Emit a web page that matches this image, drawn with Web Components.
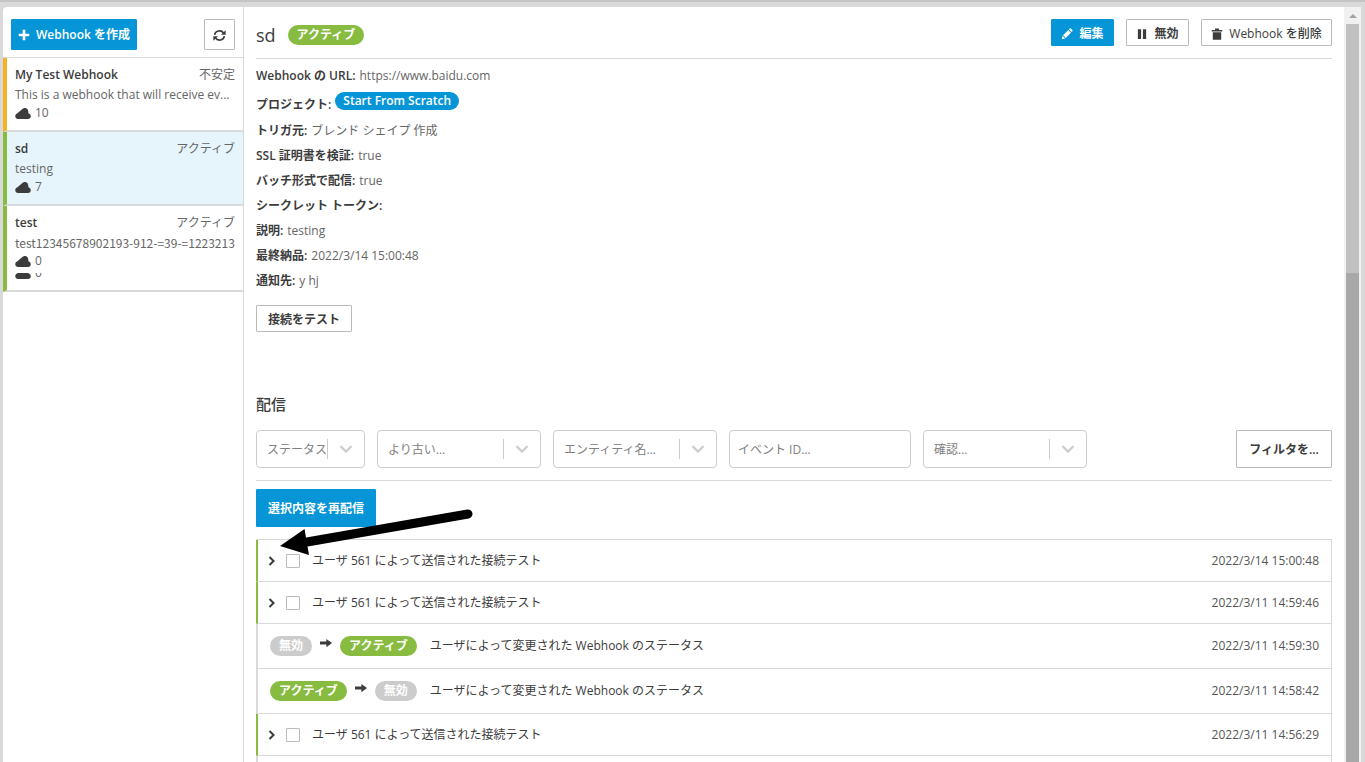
<!DOCTYPE html>
<html lang="ja">
<head>
<meta charset="utf-8">
<meta name="viewport" content="width=device-width, initial-scale=1">
<title>Webhook</title>
<style>
  html, body { margin: 0; height: 100%; }
  body {
    font: 400 12px/18px "Open Sans", "Noto Sans CJK JP", sans-serif;
    color: #3c3c3c;
    background: #d9d9d9;
    overflow: hidden;
    --line: #d9d9d9;
    --blue: #0696d7;
    --green: #87bc40;
    --muted: #666;
    --strong: 600;
  }
</style>
</head>
<body>
<webhook-app></webhook-app>
<script>
const ICONS = {
  plus: '<path d="M6.2 1h3.6v5.2H15v3.6H9.8V15H6.2V9.8H1V6.2h5.2z"/>',
  refresh: '<g fill="none" stroke="currentColor" stroke-width="2"><path d="M2 7.2A6 5.6 0 0 1 13 5M14 8.8A6 5.6 0 0 1 3 11"/></g><path d="M15.6 1.6v5.6H9.8zM.4 14.4V8.8h5.8z"/>',
  pencil: '<path d="M1 15l1-4.6 3.6 3.6zM2.8 9.6l6.9-6.9 3.6 3.6-6.9 6.9zM10.6 1.8l1-1q.9-.7 1.8.1l1.7 1.7q.8.9.1 1.8l-1 1z"/>',
  pause: '<path d="M2.5 1.5h4.3v13H2.5zM9.2 1.5h4.3v13H9.2z"/>',
  trash: '<path d="M1 2.500h4.400V.5h5.200v2H15v2H1zM2.400 5.700h11.200V15.500H2.400z"/>',
  cloud: '<path d="M3.600 14A3.200 3.200 0 0 1 .2 11A3.200 3.200 0 0 1 2.400 8.200L6.800 4.400A3.600 3.600 0 0 1 13.300 6.400L13.400 8.200A3 3 0 0 1 15.800 11A3 3 0 0 1 12.700 14z"/>',
  down: '<path fill="none" stroke="currentColor" stroke-width="2.600" stroke-linecap="round" stroke-linejoin="round" d="M2.500 5.500L8 11l5.500-5.500"/>',
  right: '<path fill="none" stroke="currentColor" stroke-width="3.200" d="M4 1.500L10.500 8L4 14.500"/>',
  arrow: '<path d="M0 6h8.500V2.500L16 8l-7.500 5.500V10H0z"/>'
};

const define = (name, html, setup) => {
  const template = document.createElement('template');
  template.innerHTML = html;
  customElements.define(name, class extends HTMLElement {
    constructor() {
      super();
      this.attachShadow({ mode: 'open' }).append(template.content.cloneNode(true));
    }
    connectedCallback() { if (setup) setup(this, this.shadowRoot); }
  });
};

define('ui-icon', `
  <style>
    :host { display: inline-block; flex: none; width: var(--icon, 12px); height: var(--icon, 12px); }
    svg { display: block; width: 100%; height: 100%; fill: currentColor; }
  </style>
  <svg viewBox="0 0 16 16" aria-hidden="true"></svg>`,
  (el, root) => { root.querySelector('svg').innerHTML = ICONS[el.getAttribute('name')]; });

define('ui-button', `
  <style>
    :host { display: inline-flex; flex: none; height: 27px; }
    button {
      display: flex; align-items: center; justify-content: center; gap: 6px;
      box-sizing: border-box; width: 100%; height: 100%; padding: 2px 0 0; margin: 0;
      font: inherit; font-weight: var(--weight, var(--strong)); white-space: nowrap;
      color: inherit; background: #fff; border: 1px solid #bbb; border-radius: 1px;
    }
    :host([primary]) button { color: #fff; background: var(--blue); border-color: var(--blue); }
  </style>
  <button type="button"><slot></slot></button>`,
  (el, root) => {
    if (el.hasAttribute('label')) root.querySelector('button').setAttribute('aria-label', el.getAttribute('label'));
  });

define('status-pill', `
  <style>
    :host {
      display: inline-flex; align-items: center; flex: none; box-sizing: border-box;
      height: 20px; padding: 0 9px; border-radius: 10px;
      color: #fff; background: var(--green); font-weight: 700;
    }
    :host([tone="off"]) { background: #ccc; }
    :host([tone="project"]) { height: 18px; padding: 0 8px; background: var(--blue); font-weight: var(--strong); }
  </style>
  <slot></slot>`);

define('webhook-item', `
  <style>
    :host {
      display: block; padding: 6px 8px 9px; border-left: 4px solid var(--green);
      border-bottom: 2px solid var(--line); background: #fff;
    }
    :host([tone="warn"]) { border-left-color: #f5b324; }
    :host([selected]) { background: #e6f4fb; }
    .head { display: flex; justify-content: space-between; line-height: 21px; }
    .name { font-weight: var(--strong); }
    .state, .text, .count { color: var(--muted); }
    .text { line-height: 20px; white-space: nowrap; }
    :host([compact]) .text { font-family: "Noto Sans CJK JP", sans-serif; }
    .count { display: flex; align-items: center; gap: 4px; line-height: 16px; --icon: 16px; }
    .count ui-icon { color: #3c3c3c; }
    .tail { display: flex; align-items: flex-end; height: 8px; overflow: hidden; margin-top: 4px; }
  </style>
  <div class="head"><span class="name"></span><span class="state"></span></div>
  <div class="text"></div>
  <div class="count"><ui-icon name="cloud"></ui-icon><span></span></div>`,
  (el, root) => {
    root.querySelector('.name').textContent = el.getAttribute('name');
    root.querySelector('.state').textContent = el.getAttribute('state');
    root.querySelector('.text').textContent = el.getAttribute('text');
    const count = root.querySelector('.count');
    count.querySelector('span').textContent = el.getAttribute('count');
    if (el.hasAttribute('tail')) {
      const tail = document.createElement('div');
      tail.className = 'tail';
      tail.append(count.cloneNode(true));
      count.after(tail);
    }
  });

define('webhook-sidebar', `
  <style>
    :host { display: block; box-sizing: border-box; background: #fff; border-right: 1px solid var(--line); border-top-left-radius: 4px; }
    header {
      display: flex; align-items: center; justify-content: space-between; box-sizing: border-box;
      height: 51px; padding: 4px 8px 0; border-bottom: 1px solid var(--line);
    }
    ui-button { height: 31px; --icon: 12px; }
    .create { width: 126px; }
    .reload { width: 31px; --icon: 13px; }
  </style>
  <header>
    <ui-button primary class="create"><ui-icon name="plus"></ui-icon><span>Webhook を作成</span></ui-button>
    <ui-button class="reload" label="更新"><ui-icon name="refresh"></ui-icon></ui-button>
  </header>
  <webhook-item tone="warn" name="My Test Webhook" state="不安定" text="This is a webhook that will receive ev..." count="10"></webhook-item>
  <webhook-item selected name="sd" state="アクティブ" text="testing" count="7"></webhook-item>
  <webhook-item compact name="test" state="アクティブ" text="test12345678902193-912-=39-=1223213" count="0" tail></webhook-item>`);

define('detail-field', `
  <style>
    :host { display: flex; align-items: baseline; gap: 4px; height: 25px; line-height: 25px; }
    :host([tall]) { height: 30px; line-height: 34px; align-items: flex-start; }
    :host([tall]) .value { display: flex; padding-top: 4px; line-height: 18px; }
    .label { font-weight: var(--strong); }
    .value { color: var(--muted); }
  </style>
  <span class="label"></span><span class="value"><slot></slot></span>`,
  (el, root) => { root.querySelector('.label').textContent = el.getAttribute('label') + ':'; });

define('filter-select', `
  <style>
    :host {
      display: flex; align-items: center; box-sizing: border-box; width: 164px; height: 38px;
      border: 1px solid #ccc; border-radius: 4px; color: #808080; background: #fff;
    }
    select {
      appearance: none; flex: 1; min-width: 0; height: 36px; margin: 0; padding: 2px 0 0 10px;
      font: inherit; color: inherit; background: none; border: 0; text-overflow: clip;
    }
    .mark {
      display: flex; align-items: center; justify-content: center; box-sizing: border-box;
      width: 37px; height: 20px; border-left: 1px solid #ccc; color: #ccc; --icon: 14px;
    }
  </style>
  <select><option></option></select>
  <span class="mark"><ui-icon name="down"></ui-icon></span>`,
  (el, root) => {
    root.querySelector('option').textContent = el.getAttribute('text');
    root.querySelector('select').setAttribute('aria-label', el.getAttribute('text'));
  });

define('filter-input', `
  <style>
    :host { display: block; width: 182px; height: 38px; }
    input {
      box-sizing: border-box; width: 100%; height: 100%; margin: 0; padding: 0 8px;
      font: inherit; color: inherit; border: 1px solid #ccc; border-radius: 4px; background: #fff;
    }
    input::placeholder { color: #808080; opacity: 1; }
  </style>
  <input type="text">`,
  (el, root) => {
    const input = root.querySelector('input');
    input.placeholder = el.getAttribute('text');
    input.setAttribute('aria-label', el.getAttribute('text'));
  });

define('delivery-row', `
  <style>
    :host {
      display: flex; align-items: center; box-sizing: border-box; height: 42px; padding: 0 12px 0 9px;
      border-left: 2px solid var(--green); border-right: 1px solid var(--line); border-bottom: 1px solid var(--line);
      --icon: 10px;
    }
    button { display: flex; margin: 0; padding: 0; border: 0; background: none; color: inherit; }
    input {
      appearance: none; flex: none; width: 14px; height: 14px; margin: 0 12px 0 9px;
      border: 1px solid #bbb; border-radius: 1px; background: #fff;
    }
    label { display: flex; align-items: center; }
    time { margin-left: auto; color: #555; }
  </style>
  <button type="button" aria-label="展開"><ui-icon name="right"></ui-icon></button>
  <label><input type="checkbox"><span><slot></slot></span></label>
  <time></time>`,
  (el, root) => { root.querySelector('time').textContent = el.getAttribute('time'); });

define('status-row', `
  <style>
    :host {
      display: flex; align-items: center; box-sizing: border-box; height: 45px; padding: 0 12px;
      border-left: 2px solid var(--line); border-right: 1px solid var(--line); border-bottom: 1px solid var(--line);
    }
    .change { display: flex; gap: 8px; margin-right: 13px; }
    time { margin-left: auto; color: #555; }
  </style>
  <span class="change"><slot name="change"></slot></span>
  <span><slot></slot></span>
  <time></time>`,
  (el, root) => { root.querySelector('time').textContent = el.getAttribute('time'); });

define('pointer-arrow', `
  <style>
    :host { position: absolute; left: 24px; top: -31px; pointer-events: none; }
    svg { display: block; }
  </style>
  <svg width="194" height="48" viewBox="0 0 194 48" aria-hidden="true">
    <path d="M188 5L27 33" stroke="#000" stroke-width="9" stroke-linecap="round"/>
    <path d="M0 37L24.500 20L29 46z"/>
  </svg>`);

define('delivery-panel', `
  <style>
    :host { display: block; }
    h2 { margin: 0; font-size: 15px; line-height: 22px; font-weight: 500; }
    .filters { display: flex; gap: 12px; margin-top: 15px; padding-bottom: 12px; border-bottom: 1px solid var(--line); }
    .short { width: 109px; }
    .apply { width: 96px; height: 38px; margin-left: auto; }
    .resend { width: 120px; height: 38px; margin: 8px 0 12px; }
    .list { position: relative; border-top: 1px solid var(--line); }
    status-row ui-icon { margin-top: 1px; }
  </style>
  <h2>配信</h2>
  <div class="filters">
    <filter-select class="short" text="ステータス..."></filter-select>
    <filter-select text="より古い..."></filter-select>
    <filter-select text="エンティティ名..."></filter-select>
    <filter-input text="イベント ID..."></filter-input>
    <filter-select text="確認..."></filter-select>
    <ui-button class="apply">フィルタを...</ui-button>
  </div>
  <ui-button primary class="resend">選択内容を再配信</ui-button>
  <div class="list" role="list">
    <delivery-row role="listitem" time="2022/3/14 15:00:48">ユーザ 561 によって送信された接続テスト</delivery-row>
    <delivery-row role="listitem" time="2022/3/11 14:59:46">ユーザ 561 によって送信された接続テスト</delivery-row>
    <status-row role="listitem" time="2022/3/11 14:59:30">
      <status-pill slot="change" tone="off">無効</status-pill><ui-icon slot="change" name="arrow"></ui-icon><status-pill slot="change">アクティブ</status-pill>ユーザによって変更された Webhook のステータス
    </status-row>
    <status-row role="listitem" time="2022/3/11 14:58:42">
      <status-pill slot="change">アクティブ</status-pill><ui-icon slot="change" name="arrow"></ui-icon><status-pill slot="change" tone="off">無効</status-pill>ユーザによって変更された Webhook のステータス
    </status-row>
    <delivery-row role="listitem" time="2022/3/11 14:56:29">ユーザ 561 によって送信された接続テスト</delivery-row>
    <status-row></status-row>
    <pointer-arrow></pointer-arrow>
  </div>`);

define('webhook-detail', `
  <style>
    :host { display: block; box-sizing: border-box; min-width: 0; padding: 0 12px; background: #fff; overflow: hidden; }
    header {
      display: flex; align-items: center; gap: 12px; box-sizing: border-box;
      height: 52px; padding-top: 4px; border-bottom: 1px solid var(--line);
    }
    h1 { margin: 0; font-size: 18px; line-height: 24px; font-weight: 500; }
    .actions { display: flex; gap: 12px; margin: 0 0 4px auto; }
    .half { width: 63px; }
    .remove { width: 131px; --weight: 500; }
    .fields { padding-top: 4px; }
    .test { width: 96px; margin: 12px 0 61px; }
    a { color: inherit; text-decoration: none; }
  </style>
  <header>
    <h1>sd</h1>
    <status-pill>アクティブ</status-pill>
    <div class="actions">
      <ui-button primary class="half"><ui-icon name="pencil"></ui-icon><span>編集</span></ui-button>
      <ui-button class="half"><ui-icon name="pause"></ui-icon><span>無効</span></ui-button>
      <ui-button class="remove"><ui-icon name="trash"></ui-icon><span>Webhook を削除</span></ui-button>
    </div>
  </header>
  <div class="fields">
    <detail-field label="Webhook の URL"><a href="https://www.baidu.com">https://www.baidu.com</a></detail-field>
    <detail-field tall label="プロジェクト"><status-pill tone="project">Start From Scratch</status-pill></detail-field>
    <detail-field label="トリガ元">ブレンド シェイプ 作成</detail-field>
    <detail-field label="SSL 証明書を検証">true</detail-field>
    <detail-field label="バッチ形式で配信">true</detail-field>
    <detail-field label="シークレット トークン"></detail-field>
    <detail-field label="説明">testing</detail-field>
    <detail-field label="最終納品">2022/3/14 15:00:48</detail-field>
    <detail-field label="通知先">y hj</detail-field>
  </div>
  <ui-button class="test">接続をテスト</ui-button>
  <delivery-panel></delivery-panel>`);

define('scroll-rail', `
  <style>
    :host { display: flex; flex-direction: column; box-sizing: border-box; padding: 0 2px; background: #f1f1f1; }
    .cap { display: flex; align-items: center; justify-content: center; height: 17px; }
    .cap::before { content: ""; border: 4px solid transparent; border-top: 0; border-bottom-color: #a3a3a3; }
    .thumb { flex: 51; background: #c1c1c1; }
    .page { flex: 100; background: #a8a8a8; }
  </style>
  <div class="cap"></div><div class="thumb"></div><div class="page"></div>`);

define('webhook-app', `
  <style>
    :host {
      display: grid; grid-template-columns: 241px minmax(0, 1fr) 17px; grid-template-rows: minmax(0, 1fr);
      box-sizing: border-box; height: 100vh; padding: 5px 4px 0 3px; border-top: 2px solid #c4c4c4; overflow: hidden;
    }
  </style>
  <webhook-sidebar></webhook-sidebar>
  <webhook-detail></webhook-detail>
  <scroll-rail></scroll-rail>`);
</script>
</body>
</html>
